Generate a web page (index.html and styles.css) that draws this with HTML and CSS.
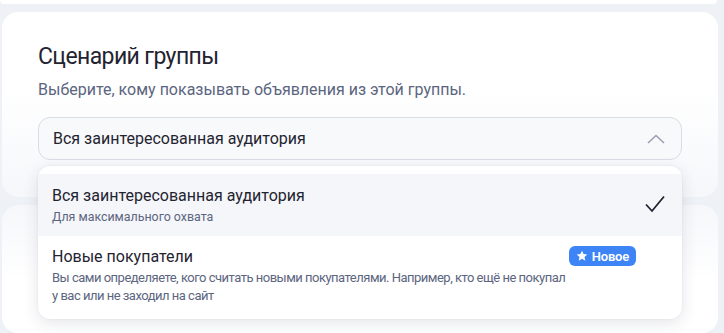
FILE: index.html
```html
<!DOCTYPE html>
<html lang="ru">
<head>
  <meta charset="UTF-8" />
  <title>Сценарий группы</title>
  <link rel="stylesheet" href="styles.css">
</head>
<body>
  <div class="page">
    <div class="card card-prev"></div>

    <div class="card card-scenario">
      <h2 class="card-title">Сценарий группы</h2>
      <p class="card-hint">Выберите, кому показывать объявления из этой группы.</p>

      <div class="select">
        <button class="select-control" type="button">
          <span>Вся заинтересованная аудитория</span>
          <svg class="chevron" width="18" height="10" viewBox="0 0 18 10">
            <path d="M1 9 L9 1.5 L17 9" fill="none" stroke="#9aa1b1" stroke-width="1.6" />
          </svg>
        </button>

        <div class="select-menu">
          <div class="option option-active">
            <div class="option-body">
              <div class="option-title">Вся заинтересованная аудитория</div>
              <div class="option-desc">Для максимального охвата</div>
            </div>
            <svg class="check" width="22" height="18" viewBox="0 0 22 18">
              <path d="M2 9.5 L8 16 L20 1.5" fill="none" stroke="#1f2430" stroke-width="1.8" />
            </svg>
          </div>
          <div class="option">
            <div class="option-body">
              <div class="option-title">Новые покупатели</div>
              <div class="option-desc">Вы сами определяете, кого считать новыми покупателями. Например, кто ещё не покупал у вас или не заходил на сайт</div>
            </div>
            <span class="badge">
              <svg width="12" height="12" viewBox="0 0 24 24">
                <path d="M12 1.5 L15.1 8.2 L22.5 9 L17 14 L18.5 21.3 L12 17.6 L5.5 21.3 L7 14 L1.5 9 L8.9 8.2 Z" fill="#fff" />
              </svg>
              Новое
            </span>
          </div>
        </div>
      </div>
    </div>

    <div class="card card-next"></div>
  </div>
</body>
</html>
```

FILE: styles.css
```css
body {
  margin: 0;
  background: #eef1f6;
  font-family: Roboto, "Noto Sans", sans-serif;
  color: #1f2430;
  overflow: hidden;
}

.page {
  display: flex;
  flex-direction: column;
  gap: 8px;
  padding: 0 6px 0 2px;
  height: 333px;
}

.card {
  background: #fff;
  border-radius: 16px;
}

.card-prev {
  height: 4px;
  margin-left: -2px;
  margin-right: 1px;
  border-radius: 0 0 16px 16px;
}

.card-scenario {
  position: relative;
  height: 185px;
  box-sizing: border-box;
  padding: 30px 36px 0;
  background: linear-gradient(180deg, #fff 40%, #f6f7fa 100%);
}

.card-next {
  flex: 1;
  background: linear-gradient(180deg, #f6f7fa 0%, #fff 60%);
}

.card-title {
  margin: 0;
  font-size: 23px;
  font-weight: 400;
  line-height: 30px;
  letter-spacing: -0.6px;
}

.card-hint {
  margin: 8px 0 0;
  font-size: 16px;
  line-height: 20px;
  color: #5b6580;
}

.select {
  position: relative;
  margin-top: 17px;
}

.select-control {
  display: flex;
  align-items: center;
  justify-content: space-between;
  width: 100%;
  height: 43px;
  padding: 0 16px 0 14px;
  border: 1px solid #d9dde6;
  border-radius: 12px;
  background: #f8f9fb;
  font: inherit;
  font-size: 16px;
  color: #1f2430;
  text-align: left;
}

.select-menu {
  position: absolute;
  top: 49px;
  left: 0;
  right: 0;
  padding: 8px 0 4px;
  background: #fff;
  border-radius: 12px;
  box-shadow: 0 4px 16px rgba(30, 40, 70, 0.12), 0 0 2px rgba(30, 40, 70, 0.08);
  z-index: 2;
}

.option {
  display: flex;
  align-items: flex-start;
  padding: 10px 16px 10px 14px;
}

.option-active {
  align-items: center;
  background: #f5f6fa;
  padding-top: 11px;
  padding-bottom: 10px;
}

.option-body {
  max-width: 522px;
}

.option-title {
  font-size: 16px;
  line-height: 22px;
}

.option-desc {
  margin-top: 1px;
  font-size: 12.4px;
  line-height: 18px;
  color: #5c6580;
}

.option:not(.option-active) .option-desc {
  font-size: 13px;
  letter-spacing: -0.5px;
}

.check {
  margin-left: auto;
  margin-bottom: 4px;
}

.badge {
  display: flex;
  align-items: center;
  gap: 4px;
  margin-left: auto;
  margin-right: 30px;
  padding: 0 7px;
  height: 20px;
  border-radius: 6px;
  background: #3d84f7;
  color: #fff;
  font-size: 13px;
  font-weight: 600;
  letter-spacing: -0.2px;
}
```
